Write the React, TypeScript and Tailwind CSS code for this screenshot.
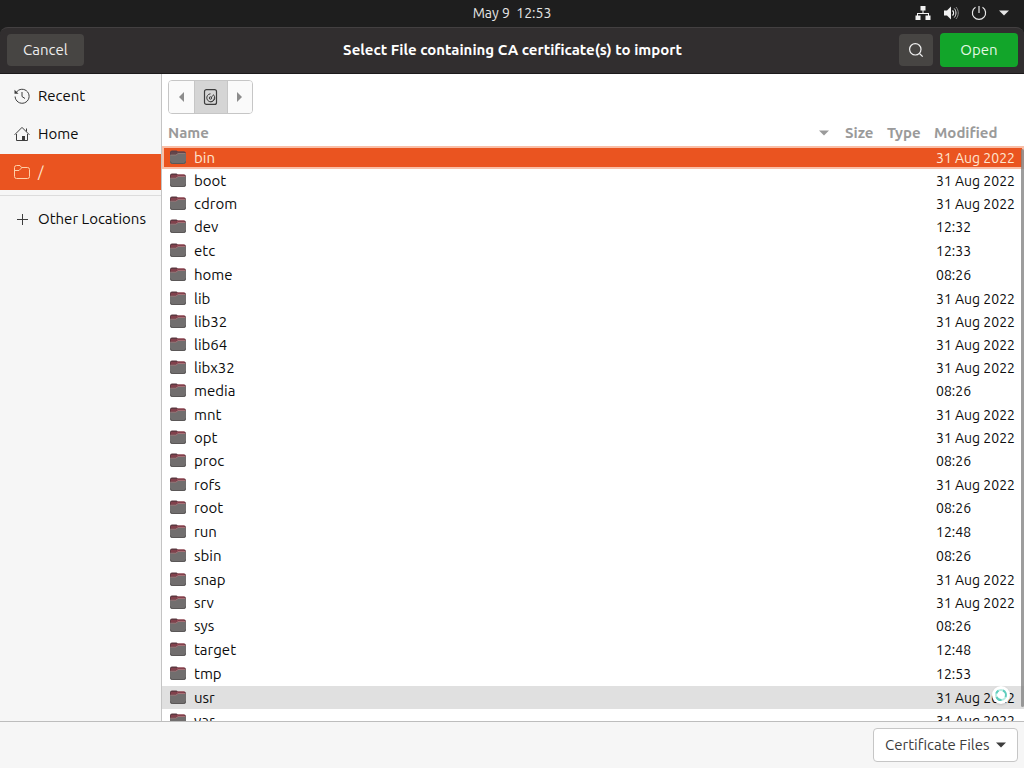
import { useState } from "react";

interface FileEntry {
  name: string;
  modified: string;
}

const files: FileEntry[] = [
  { name: "bin", modified: "31 Aug 2022" },
  { name: "boot", modified: "31 Aug 2022" },
  { name: "cdrom", modified: "31 Aug 2022" },
  { name: "dev", modified: "12:32" },
  { name: "etc", modified: "12:33" },
  { name: "home", modified: "08:26" },
  { name: "lib", modified: "31 Aug 2022" },
  { name: "lib32", modified: "31 Aug 2022" },
  { name: "lib64", modified: "31 Aug 2022" },
  { name: "libx32", modified: "31 Aug 2022" },
  { name: "media", modified: "08:26" },
  { name: "mnt", modified: "31 Aug 2022" },
  { name: "opt", modified: "31 Aug 2022" },
  { name: "proc", modified: "08:26" },
  { name: "rofs", modified: "31 Aug 2022" },
  { name: "root", modified: "08:26" },
  { name: "run", modified: "12:48" },
  { name: "sbin", modified: "08:26" },
  { name: "snap", modified: "31 Aug 2022" },
  { name: "srv", modified: "31 Aug 2022" },
  { name: "sys", modified: "08:26" },
  { name: "target", modified: "12:48" },
  { name: "tmp", modified: "12:53" },
  { name: "usr", modified: "31 Aug 2022" },
  { name: "var", modified: "31 Aug 2022" },
];

const FolderIcon = ({ selected }: { selected: boolean }) => (
  <svg width="16" height="16" viewBox="0 0 16 16" className="shrink-0">
    <path d="M0 2.500a2 2 0 0 1 2-2h4.500l1.500 1H14a2 2 0 0 1 2 2V8H0z" fill={selected ? "#5a4048" : "#5c3840"} />
    <path d="M1 3h5.500l1.500-1h6.500" fill="none" stroke={selected ? "#6e4a4c" : "#a84a58"} />
    <path d="M0 5h6l2-1.500h8V12a2 2 0 0 1-2 2H2a2 2 0 0 1-2-2z" fill="#716e6e" />
    <path d="M.5 5H6l2-1.500h7.500" fill="none" stroke={selected ? "#a08078" : "#b5767c"} strokeWidth=".8" />
    <path d="M.5 11.500a2 2 0 0 0 2 2h11a2 2 0 0 0 2-2" fill="none" stroke="#5a5757" />
  </svg>
);

const RecentIcon = () => (
  <svg width="16" height="16" viewBox="0 0 16 16" fill="none" stroke="#3d3d3d">
    <path d="M2.200 4.500A7 7 0 1 1 1.100 8.500M8 4v4.500l3 2" />
    <path d="M.5 1.800v4h4z" fill="#3d3d3d" stroke="none" />
  </svg>
);

const HomeIcon = () => (
  <svg width="16" height="16" viewBox="0 0 16 16" fill="none" stroke="#3d3d3d">
    <path d="M.6 8.800 8 1.400l7.400 7.400M2.500 8v6.500h11V8M12.500 5.500V2.500" />
    <path d="M8 10h3v4.500H8z" fill="#3d3d3d" stroke="none" />
  </svg>
);

const RootIcon = () => (
  <svg width="16" height="16" viewBox="0 0 16 16" fill="none" stroke="#ffd0a8">
    <path d="M.5 12.500v-9a2 2 0 0 1 2-2h3.500l1.500 2h6a2 2 0 0 1 2 2v7a2 2 0 0 1-2 2h-11a2 2 0 0 1-2-2zM.5 6.500h4.500l3-3" />
  </svg>
);

const PlusIcon = () => (
  <svg width="16" height="16" viewBox="0 0 16 16" stroke="#3d3d3d">
    <path d="M8.500 3v11M3 8.500h11" />
  </svg>
);

const DiskIcon = () => (
  <svg width="16" height="16" viewBox="0 0 16 16" fill="none" stroke="#3d3d3d">
    <rect x="1.500" y=".6" width="12" height="14.800" rx="2" strokeWidth="1.200" />
    <path d="M10.800 6.200A4 4 0 1 1 7.500 4.800M7.500 12.800a4 4 0 0 0 3.900-4.500" />
    <circle cx="7.500" cy="9" r="1.200" />
    <path d="M8.300 8.200 11 5.500" />
  </svg>
);

const NetworkIcon = () => (
  <svg width="16" height="16" viewBox="0 0 16 16" fill="#f2f2f2">
    <path d="M5.500 1h5v4.500h-2V8H14v2.500h1.500V15h-5v-4.500H13V9H3v1.500h2.500V15h-5v-4.500H2V8h5.500V5.500h-2z" />
  </svg>
);

const VolumeIcon = () => (
  <svg width="16" height="16" viewBox="0 0 16 16" fill="none" stroke="#f2f2f2">
    <path d="M1 5.500h3L8 1.500v13l-4-4H1z" fill="#f2f2f2" stroke="none" />
    <path d="M9.500 5.500c1.300 1.300 1.300 3.700 0 5" strokeWidth="1.300" />
    <path d="M11.300 3.500c2.200 2.400 2.200 6.600 0 9" />
    <path d="M13 2c3 3.500 3 8.500 0 12" stroke="#8b8b8b" />
  </svg>
);

const PowerIcon = () => (
  <svg width="16" height="16" viewBox="0 0 16 16" fill="none" stroke="#e8e8e8" strokeWidth="1.200">
    <path d="M4.500 2.200a6.600 6.600 0 1 0 7 0M8 1v7" />
  </svg>
);

const SearchIcon = () => (
  <svg width="16" height="16" viewBox="0 0 16 16" fill="none" stroke="#f0f0f0" strokeWidth="1.200">
    <circle cx="7.300" cy="7.300" r="5.700" />
    <path d="m11.500 11.500 3.200 3.200" />
  </svg>
);

const ArrowDown = ({ className }: { className?: string }) => (
  <svg width="10" height="6" viewBox="0 0 10 6" fill="currentColor" className={className}>
    <path d="M0 .5h10L5 5.500z" />
  </svg>
);

const places = [
  { label: "Recent", icon: <RecentIcon /> },
  { label: "Home", icon: <HomeIcon /> },
  { label: "/", icon: <RootIcon /> },
];

const App = () => {
  const [selected, setSelected] = useState("bin");
  const [place, setPlace] = useState("/");

  return (
    <div className="flex h-screen flex-col overflow-hidden bg-[#1e1e1e] font-['Ubuntu','Noto_Sans',sans-serif] text-[15px] text-[#0c0c0c]">
      {/* System bar */}
      <div className="grid h-[27px] shrink-0 grid-cols-[1fr_auto_1fr] items-center px-3 pb-px text-[#e6e6e6]">
        <span />
        <time className="text-sm whitespace-pre">May 9  12:53</time>
        <div className="flex items-center justify-end gap-3 pr-[3px]">
          <NetworkIcon />
          <VolumeIcon />
          <PowerIcon />
          <ArrowDown />
        </div>
      </div>

      {/* Header bar */}
      <header className="grid h-[47px] shrink-0 grid-cols-[1fr_auto_1fr] items-center rounded-t-lg border-t border-b border-t-[#434041] border-b-[#1c1a1b] bg-[#312e2f] pr-[6px] pb-px pl-[7px]">
        <div>
          <button className="h-8 rounded bg-[#474543] px-4 text-[#eeeeee]">Cancel</button>
        </div>
        <h1 className="font-bold text-white">Select File containing CA certificate(s) to import</h1>
        <div className="flex items-center justify-end gap-[7px]">
          <button aria-label="Search" className="flex h-8 w-[34px] items-center justify-center rounded bg-[#474543]">
            <SearchIcon />
          </button>
          <button className="h-[34px] w-[78px] rounded bg-[#12a52a] text-[#e4f8e2]">Open</button>
        </div>
      </header>

      <div className="flex min-h-0 flex-1 bg-white">
        {/* Places */}
        <nav className="flex w-[162px] shrink-0 flex-col border-r border-[#c4c4c4] bg-[#f6f6f6] pt-1">
          <ul className="flex flex-col gap-[2px]">
            {places.map((p) => (
              <li key={p.label}>
                <button
                  onClick={() => setPlace(p.label)}
                  className={`flex h-9 w-full items-center gap-2 pl-[14px] ${place === p.label ? "bg-[#ea5420] text-[#ffe6d0]" : ""}`}
                >
                  {p.icon} {p.label}
                </button>
              </li>
            ))}
          </ul>
          <hr className="my-[5px] border-[#dcdcdc]" />
          <button className="flex h-9 items-center gap-2 pl-[14px] whitespace-nowrap">
            <PlusIcon /> Other Locations
          </button>
        </nav>

        {/* Files */}
        <main className="relative flex min-w-0 flex-1 flex-col overflow-hidden">
          <div className="shrink-0 p-[6px]">
            <div className="flex h-[34px] w-[85px] overflow-hidden rounded border border-[#c6c6c6] text-[#8c8c8c]">
              <button aria-label="Back" className="flex flex-1 items-center justify-center bg-[#fafafa]">
                <svg width="5" height="10" viewBox="0 0 5 10" fill="currentColor"><path d="M5 0v10L0 5z" /></svg>
              </button>
              <button aria-label="File system root" className="flex w-[34px] items-center justify-center border-x border-[#c6c6c6] bg-[#d5d5d5]">
                <DiskIcon />
              </button>
              <button aria-label="Forward" className="flex flex-1 items-center justify-center bg-[#fafafa]">
                <svg width="5" height="10" viewBox="0 0 5 10" fill="currentColor"><path d="M0 0v10l5-5z" /></svg>
              </button>
            </div>
          </div>

          <div className="min-h-0 flex-1 overflow-hidden">
            <table className="w-full table-fixed border-collapse">
              <thead>
                <tr className="h-[26px] text-left text-[#9a9a9a]">
                  <th className="p-0 pl-[6px]">
                    <div className="flex items-center justify-between pr-[9px]">
                      Name <ArrowDown />
                    </div>
                  </th>
                  <th className="w-[43px] p-0 pl-[7px]">Size</th>
                  <th className="w-[47px] p-0 pl-[6px]">Type</th>
                  <th className="w-24 p-0 pl-[6px]">Modified</th>
                </tr>
              </thead>
              <tbody>
                {files.map((f) => (
                  <tr
                    key={f.name}
                    onClick={() => setSelected(f.name)}
                    className={`leading-[22px] ${f.modified.includes(":") ? "h-6" : "h-[23px]"} ${
                      selected === f.name
                        ? "bg-[#ea5420] text-[#ffe6d0] outline-2 -outline-offset-2 outline-[#f9bfa8]"
                        : f.name === "usr"
                          ? "bg-[#e0e0e0]"
                          : ""
                    }`}
                  >
                    <td className="p-0 pl-2">
                      <div className="flex items-center gap-2">
                        <FolderIcon selected={selected === f.name} /> {f.name}
                      </div>
                    </td>
                    <td className="p-0" />
                    <td className="p-0" />
                    <td className="p-0 pl-2 text-[14px] whitespace-nowrap">{f.modified}</td>
                  </tr>
                ))}
              </tbody>
            </table>
          </div>

          {/* Scroll thumb and busy pointer */}
          <div className="absolute top-[75px] right-0 bottom-[14px] w-[3px] rounded-full bg-[#858585]/80" />
          <div className="absolute right-[14px] bottom-[17px] flex size-[18px] items-center justify-center rounded-full bg-white shadow">
            <svg width="14" height="14" viewBox="0 0 14 14" fill="none" strokeWidth="2">
              <circle cx="7" cy="7" r="5" stroke="#b9ece2" />
              <path d="M2.500 9a5 5 0 0 0 5 3M11.500 9A5 5 0 0 0 9 2.500M2.300 5.500A5 5 0 0 1 4.500 2.600" stroke="#5fcdbd" />
            </svg>
          </div>
        </main>
      </div>

      {/* Filter */}
      <footer className="flex h-[47px] shrink-0 items-center justify-end border-t border-[#bdbdbd] bg-[#f6f6f6] px-[6px]">
        <div className="relative">
          <select
            aria-label="File type"
            defaultValue="cert"
            className="h-[34px] w-[145px] appearance-none rounded border border-[#c6c6c6] bg-white pl-[11px] text-[#3d3d3d]"
          >
            <option value="cert">Certificate Files</option>
            <option value="all">All Files</option>
          </select>
          <ArrowDown className="pointer-events-none absolute top-[14px] right-3 text-[#3d3d3d]" />
        </div>
      </footer>
    </div>
  );
};

export default App;
